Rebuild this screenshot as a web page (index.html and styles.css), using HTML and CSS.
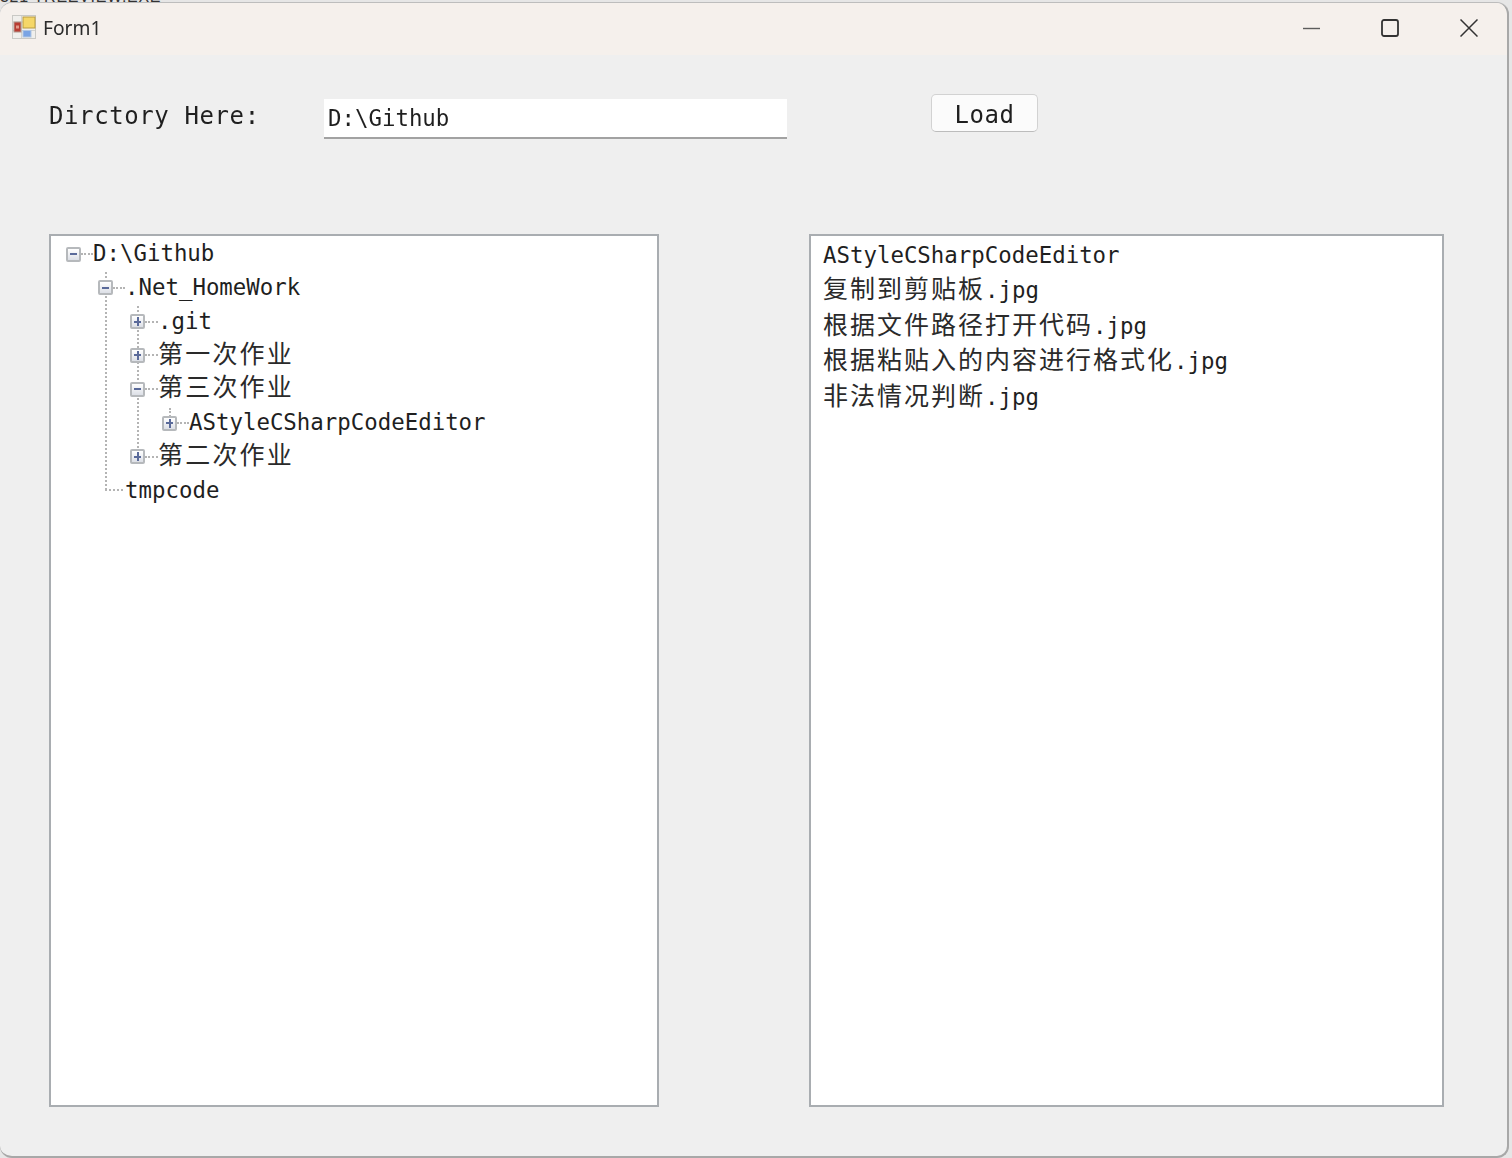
FILE: index.html
```html
<!DOCTYPE html>
<html lang="zh-CN">
<head>
<meta charset="utf-8">
<title>Form1</title>
<link rel="stylesheet" href="styles.css">
</head>
<body>
<div class="behind">321 TREEVIEW.EXE</div>
<main class="window">
  <header class="titlebar">
    <svg class="app-icon" width="24" height="24" viewBox="0 0 24 24">
      <rect x="0.500" y="0.500" width="23" height="23" fill="#f0efec" stroke="#c9c9c5"/>
      <path d="M9.500 1V23M1 15.500H23M1 7H11" stroke="#d2d2ce" fill="none"/>
      <rect x="2" y="7" width="7" height="10" fill="#b83c32" stroke="#b09a90"/>
      <rect x="4" y="10.500" width="3" height="3" fill="#e29a8a"/>
      <rect x="11" y="2" width="12" height="11" fill="#f5d768" stroke="#b99c42"/>
      <rect x="11" y="15.500" width="8" height="6.500" fill="#7aa4e4" stroke="#b0c6e2"/>
    </svg>
    <span class="title">Form1</span>
    <div class="controls">
      <svg class="ctl" width="18" height="18" viewBox="0 0 18 18"><path d="M0 9.500H17" stroke="#5c5c5c" stroke-width="1.400" fill="none"/></svg>
      <svg class="ctl" width="18" height="18" viewBox="0 0 18 18"><rect x="1" y="1" width="16" height="16" rx="2" stroke="#333" stroke-width="1.800" fill="none"/></svg>
      <svg class="ctl close" width="18" height="18" viewBox="0 0 18 18"><path d="M0.500 0.500L17.500 17.500M17.500 0.500L0.500 17.500" stroke="#333" stroke-width="1.500" fill="none"/></svg>
    </div>
  </header>
  <section class="client">
    <div class="toprow">
      <label class="dir-label">Dirctory Here:</label>
      <div class="textbox">D:\Github</div>
      <button class="load">Load</button>
    </div>
    <div class="panes">
      <div class="pane tree">
        <div class="node l0"><span class="box minus"></span><span class="dash"></span><span class="lbl">D:\Github</span></div>
        <div class="node l1"><span class="box minus"></span><span class="dash"></span><span class="lbl">.Net_HomeWork</span></div>
        <div class="node l2"><span class="box plus"></span><span class="dash"></span><span class="lbl">.git</span></div>
        <div class="node l2"><span class="box plus"></span><span class="dash"></span><span class="lbl"><span class="cjk">第一次作业</span></span></div>
        <div class="node l2"><span class="box minus"></span><span class="dash"></span><span class="lbl"><span class="cjk">第三次作业</span></span></div>
        <div class="node l3"><span class="box plus"></span><span class="dash"></span><span class="lbl">AStyleCSharpCodeEditor</span></div>
        <div class="node l2"><span class="box plus"></span><span class="dash"></span><span class="lbl"><span class="cjk">第二次作业</span></span></div>
        <div class="node leaf"><span class="elbow"></span><span class="lbl">tmpcode</span></div>
        <span class="vline v1"></span>
        <span class="vline v2"></span>
        <span class="vline v3"></span>
      </div>
      <ul class="pane list">
        <li>AStyleCSharpCodeEditor</li>
        <li><span class="cjk">复制到剪贴板</span>.jpg</li>
        <li><span class="cjk">根据文件路径打开代码</span>.jpg</li>
        <li><span class="cjk">根据粘贴入的内容进行格式化</span>.jpg</li>
        <li><span class="cjk">非法情况判断</span>.jpg</li>
      </ul>
    </div>
  </section>
</main>
</body>
</html>
```
FILE: styles.css
```css
* { box-sizing: border-box; }
html, body { margin: 0; height: 100%; }
body {
  width: 1512px;
  height: 1158px;
  background: #e6e6e6;
  overflow: hidden;
  position: relative;
  font-family: "DejaVu Sans Mono", "Noto Sans CJK SC", monospace;
  color: #1f1f1f;
}
.behind {
  position: absolute;
  left: 0;
  top: -12px;
  font: 16px "Liberation Sans", sans-serif;
  color: #333;
  letter-spacing: 0.700px;
}
.window {
  position: absolute;
  left: 0;
  top: 3px;
  width: 1509px;
  height: 1155px;
  background: #efefef;
  border-radius: 12px;
  border-right: 2px solid #a8a8a8;
  border-bottom: 2px solid #a8a8a8;
  box-shadow: 0 -1px 0 #bdbdbd;
  overflow: hidden;
}
.titlebar {
  height: 52px;
  background: #f5f0ec;
  display: flex;
  align-items: center;
  padding: 0 0 4px 12px;
  filter: blur(0.350px);
}
.app-icon { flex: none; }
.title {
  margin-left: 7px;
  font: 19.200px "Noto Sans", "Open Sans", sans-serif;
  color: #2b2b2b;
}
.controls {
  margin: 2px 0 0 auto;
  display: flex;
  gap: 60px;
  padding-right: 29px;
}
.close { margin-left: 1px; }
.client {
  padding: 44px 0 0 49px;
  filter: blur(0.350px);
}
.toprow {
  display: flex;
  align-items: flex-start;
  height: 135px;
}
.dir-label {
  width: 275px;
  font-size: 24px;
  letter-spacing: 0.600px;
  padding-top: 3px;
}
.textbox {
  width: 463px;
  height: 40px;
  background: #fff;
  border-bottom: 2px solid #a2a2a2;
  padding: 6px 0 0 4px;
  font-size: 22.400px;
}
.load {
  margin: -5px 0 0 144px;
  width: 107px;
  height: 38px;
  background: #fbfbfb;
  border: 1px solid #d2d2d2;
  border-bottom-color: #bcbcbc;
  border-radius: 5px;
  font-family: inherit;
  font-size: 24px;
  letter-spacing: 0.600px;
  color: #1f1f1f;
  padding: 3px 0 0;
}
.panes {
  display: flex;
  gap: 150px;
}
.pane {
  height: 873px;
  background: #fff;
  border: 2px solid #a9adb1;
  margin: 0;
  font-size: 22.400px;
  list-style: none;
  position: relative;
}
.tree { width: 610px; }
.list { width: 635px; padding: 2px 0 0 12px; }
.list li {
  height: 35.400px;
  line-height: 35px;
  white-space: nowrap;
}
.cjk {
  font-family: "Noto Sans CJK SC", sans-serif;
  font-size: 25px;
  line-height: 0;
  letter-spacing: 2px;
  color: #2a2a2a;
}
.tree .cjk { letter-spacing: 2.200px; }
.node {
  height: 33.800px;
  display: flex;
  align-items: center;
  white-space: nowrap;
}
.lbl { line-height: 34px; }
.l0 { padding-left: 15px; height: 34px; }
.l1 { padding-left: 47px; }
.l2 { padding-left: 79px; }
.l3 { padding-left: 111px; }
.l2 .dash { width: 13px; }
.box {
  flex: none;
  width: 15px;
  height: 15px;
  margin-top: 2px;
  border: 2px solid #b6b9bc;
  border-radius: 2px;
  background: linear-gradient(#ffffff, #dcdfe6);
  position: relative;
  z-index: 1;
}
.box::before, .plus::after {
  content: "";
  position: absolute;
  background: #5a6a9a;
}
.box::before { left: 2px; right: 2px; top: 4.500px; height: 2px; }
.plus::after { top: 1px; bottom: 1px; left: 4.500px; width: 2px; }
.dash {
  flex: none;
  width: 12px;
  height: 0;
  margin-top: 2px;
  border-top: 2px dotted #b4b4b4;
}
.leaf { padding-left: 54px; }
.elbow {
  flex: none;
  width: 18px;
  height: 0;
  margin-right: 2px;
  border-top: 2px dotted #b4b4b4;
}
.vline {
  position: absolute;
  width: 0;
  border-left: 2px dotted #b4b4b4;
}
.v1 { left: 54px; top: 36px; height: 218px; }
.v2 { left: 86px; top: 70px; height: 146px; }
.v3 { left: 118px; top: 172px; height: 12px; }
```
